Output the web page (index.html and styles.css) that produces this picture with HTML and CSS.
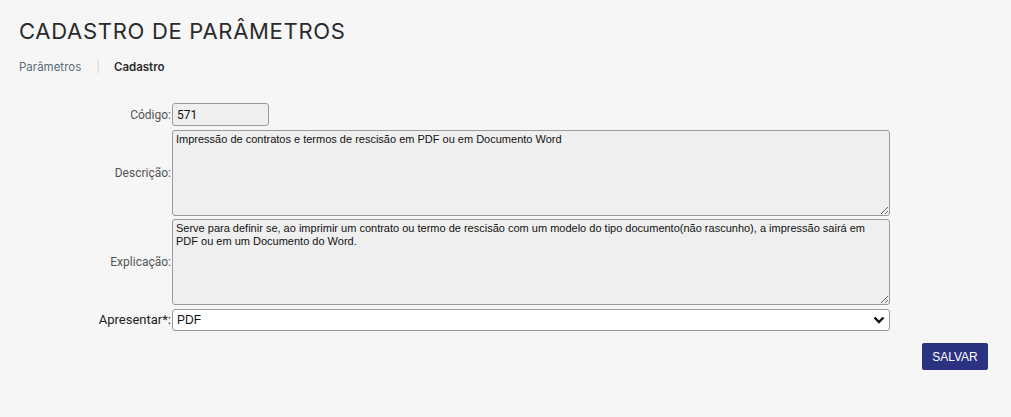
FILE: index.html
```html
<!DOCTYPE html>
<html lang="pt-BR">
<head>
<meta charset="utf-8">
<title>Cadastro de Parâmetros</title>
<link rel="stylesheet" href="styles.css">
</head>
<body>
<main class="page">
  <h1 class="title">CADASTRO DE PARÂMETROS</h1>
  <nav class="crumbs">
    <a class="crumb-link" href="#">Parâmetros</a>
    <span class="crumb-sep">|</span>
    <span class="crumb-current">Cadastro</span>
  </nav>
  <form class="form">
    <label class="lbl" for="codigo">Código:</label>
    <div class="field"><input id="codigo" class="inp inp-code" type="text" value="571" readonly></div>

    <label class="lbl" for="descricao">Descrição:</label>
    <div class="field"><textarea id="descricao" class="area" readonly>Impressão de contratos e termos de rescisão em PDF ou em Documento Word</textarea></div>

    <label class="lbl" for="explicacao">Explicação:</label>
    <div class="field"><textarea id="explicacao" class="area" readonly>Serve para definir se, ao imprimir um contrato ou termo de rescisão com um modelo do tipo documento(não rascunho), a impressão sairá em PDF ou em um Documento do Word.</textarea></div>

    <label class="lbl lbl-strong" for="apresentar">Apresentar*:</label>
    <div class="field select-wrap">
      <select id="apresentar" class="sel">
        <option>PDF</option>
        <option>Word</option>
      </select>
      <svg class="chev" width="12" height="8" viewBox="0 0 12 8"><path d="M1.5 1.5 L6 6 L10.5 1.5" fill="none" stroke="#111" stroke-width="2.4"/></svg>
    </div>

    <div class="actions">
      <button type="button" class="btn">SALVAR</button>
    </div>
  </form>
</main>
</body>
</html>
```

FILE: styles.css
```css
html, body {
  margin: 0;
  padding: 0;
  background: #f6f6f6;
}
.page {
  padding: 15px 19px 20px 19px;
  font-family: "Liberation Sans", Arial, sans-serif;
}
.title {
  margin: 0;
  font-family: Inter, "Open Sans", sans-serif;
  font-weight: 400;
  font-size: 22px;
  line-height: 32px;
  color: #2a2a2a;
  letter-spacing: 0.7px;
}
.crumbs {
  display: flex;
  align-items: center;
  margin-top: 12px;
  font-family: Inter, sans-serif;
  font-size: 11.5px;
  line-height: 16px;
}
.crumb-link {
  color: #5d6b7a;
  text-decoration: none;
}
.crumb-sep {
  color: #d0d0d0;
  margin: 0 14px 0 15px;
  font-size: 11px;
}
.crumb-current {
  color: #2a2a2a;
  font-weight: 600;
}
.form {
  display: grid;
  grid-template-columns: 153px 718px;
  row-gap: 3px;
  margin-top: 28px;
  font-family: Roboto, "Liberation Sans", sans-serif;
}
.lbl {
  display: flex;
  align-items: center;
  justify-content: flex-end;
  padding-right: 1px;
  font-size: 12px;
  color: #555;
}
.lbl-strong {
  color: #222;
  font-size: 13px;
}
.field {
  display: flex;
}
.inp {
  box-sizing: border-box;
  height: 23px;
  padding: 1px 4px;
  border: 1px solid #9a9a9a;
  border-radius: 3px;
  background: #efefef;
  font-family: Roboto, "Liberation Sans", Arial, sans-serif;
  font-size: 12px;
  color: #111;
  outline: none;
}
.inp-code {
  width: 97px;
  margin-bottom: 1px;
}
.area {
  box-sizing: border-box;
  width: 718px;
  height: 86px;
  padding: 2px 3px;
  border: 1px solid #9a9a9a;
  border-radius: 3px;
  background: #efefef;
  font-family: "Liberation Sans", Arial, sans-serif;
  font-size: 11px;
  line-height: 13px;
  color: #111;
  outline: none;
  resize: vertical;
}
.select-wrap {
  position: relative;
  margin-top: 1px;
}
.sel {
  box-sizing: border-box;
  width: 718px;
  height: 22px;
  padding: 0 4px;
  border: 1px solid #9a9a9a;
  border-radius: 3px;
  background: #fff;
  font-family: "Liberation Sans", Arial, sans-serif;
  font-size: 12px;
  color: #111;
  appearance: none;
  -webkit-appearance: none;
  outline: none;
}
.chev {
  position: absolute;
  right: 5px;
  top: 7px;
  pointer-events: none;
}
.actions {
  grid-column: 1 / 3;
  display: flex;
  justify-content: flex-end;
  margin-top: 9px;
  margin-right: -98px;
}
.btn {
  width: 66px;
  height: 27px;
  border: 0;
  border-radius: 2px;
  background: #2c3282;
  color: #fff;
  font-family: "Liberation Sans", Arial, sans-serif;
  font-size: 12px;
  padding: 0;
}
```
